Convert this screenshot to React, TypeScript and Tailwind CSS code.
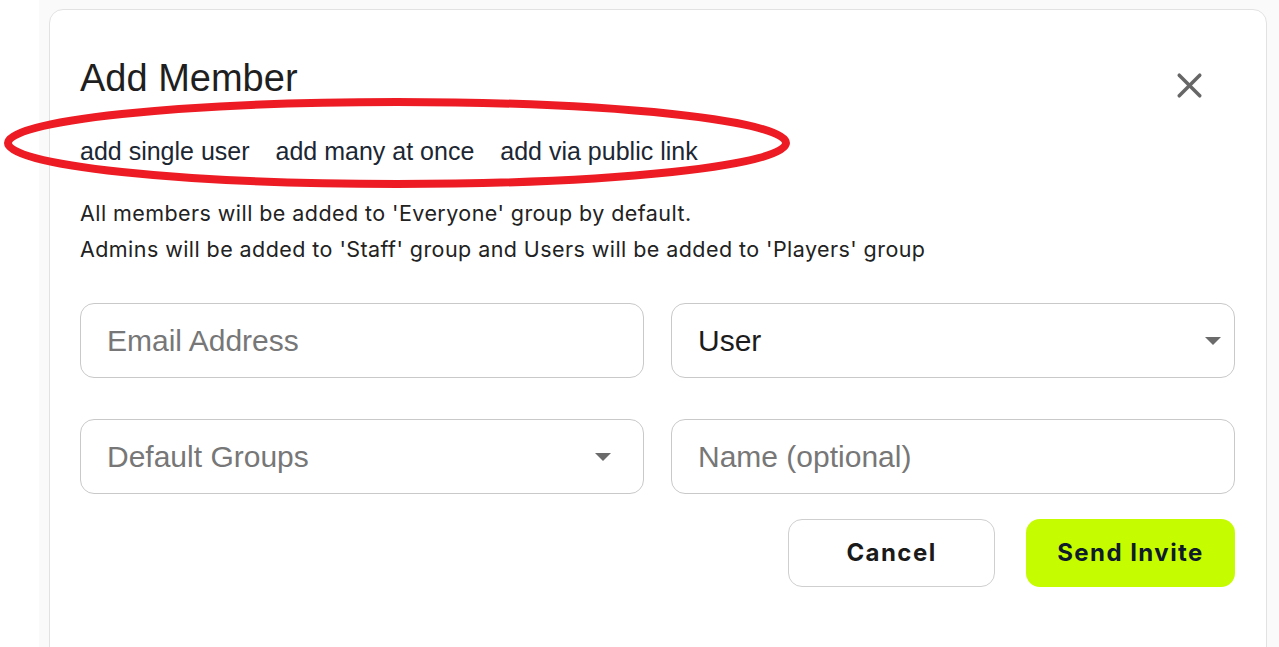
import { X } from "lucide-react";

const Caret = () => (
  <svg width="16" height="8" viewBox="0 0 16 8" className="shrink-0">
    <path d="M0 0 L16 0 L8 8 Z" fill="#6b6b6b" />
  </svg>
);

const Field = ({ text, filled, caret, pr }: { text: string; filled?: boolean; caret?: boolean; pr?: string }) => (
  <div className={`flex h-[75px] items-center justify-between rounded-[14px] border border-[#c9c9c9] bg-white pl-[26px] ${pr ?? "pr-[13px]"}`}>
    <span
      className={`text-[30px] ${filled ? "text-[#1c1c1c]" : "text-[#777777]"}`}
      style={{ fontFamily: '"Liberation Sans", Arial, sans-serif' }}
    >
      {text}
    </span>
    {caret && <Caret />}
  </div>
);

export default function App() {
  return (
    <div className="relative flex h-[647px] w-full overflow-hidden bg-white">
      <div className="w-[39px] shrink-0 bg-white" />
      <div className="flex flex-1 bg-[#fafafa] pl-[10px] pr-[12px] pt-[9px]">
        <div className="flex h-[700px] flex-1 flex-col rounded-t-[14px] border border-[#e2e2e2] bg-white pl-[30px] pr-[31px] pt-[46px]">
          <div className="flex items-start justify-between">
            <h1
              className="text-[38px] leading-[44px] text-[#1f1f1f]"
              style={{ fontFamily: '"Liberation Sans", Arial, sans-serif' }}
            >
              Add Member
            </h1>
            <X className="mr-[25px] mt-[9px] h-[41px] w-[41px] text-[#666666]" strokeWidth={2.1} />
          </div>

          <div
            className="mt-[30px] flex gap-[26px] text-[25px] leading-[30px] text-[#1c2733]"
            style={{ fontFamily: '"Liberation Sans", Arial, sans-serif' }}
          >
            <span>add single user</span>
            <span>add many at once</span>
            <span>add via public link</span>
          </div>

          <div
            className="mt-[29px] flex flex-col text-[21.5px] leading-[36px] tracking-[0.02em] text-[#222222]"
            style={{ fontFamily: "Inter, Roboto, sans-serif" }}
          >
            <p>All members will be added to 'Everyone' group by default.</p>
            <p>Admins will be added to 'Staff' group and Users will be added to 'Players' group</p>
          </div>

          <div className="mt-[36px] grid grid-cols-2 gap-x-[27px] gap-y-[41px]">
            <Field text="Email Address" />
            <Field text="User" filled caret />
            <Field text="Default Groups" caret pr="pr-[32px]" />
            <Field text="Name (optional)" />
          </div>

          <div
            className="mt-[25px] flex justify-end gap-[31px]"
            style={{ fontFamily: "Inter, Roboto, sans-serif" }}
          >
            <button className="h-[68px] w-[207px] rounded-[14px] border border-[#cfcfcf] bg-white text-[24px] font-bold tracking-[0.06em] text-[#1a1a1a]">
              Cancel
            </button>
            <button className="h-[68px] w-[209px] rounded-[14px] bg-[#c6fc00] text-[24px] font-bold tracking-[0.06em] text-[#0f1a2a]">
              Send Invite
            </button>
          </div>
        </div>
      </div>

      {/* annotation ring */}
      <svg className="pointer-events-none absolute left-0 top-[96px]" width="800" height="96" viewBox="0 0 800 96">
        <ellipse cx="397" cy="47" rx="389" ry="41" fill="none" stroke="#ed1c24" strokeWidth="8" />
      </svg>
    </div>
  );
}
